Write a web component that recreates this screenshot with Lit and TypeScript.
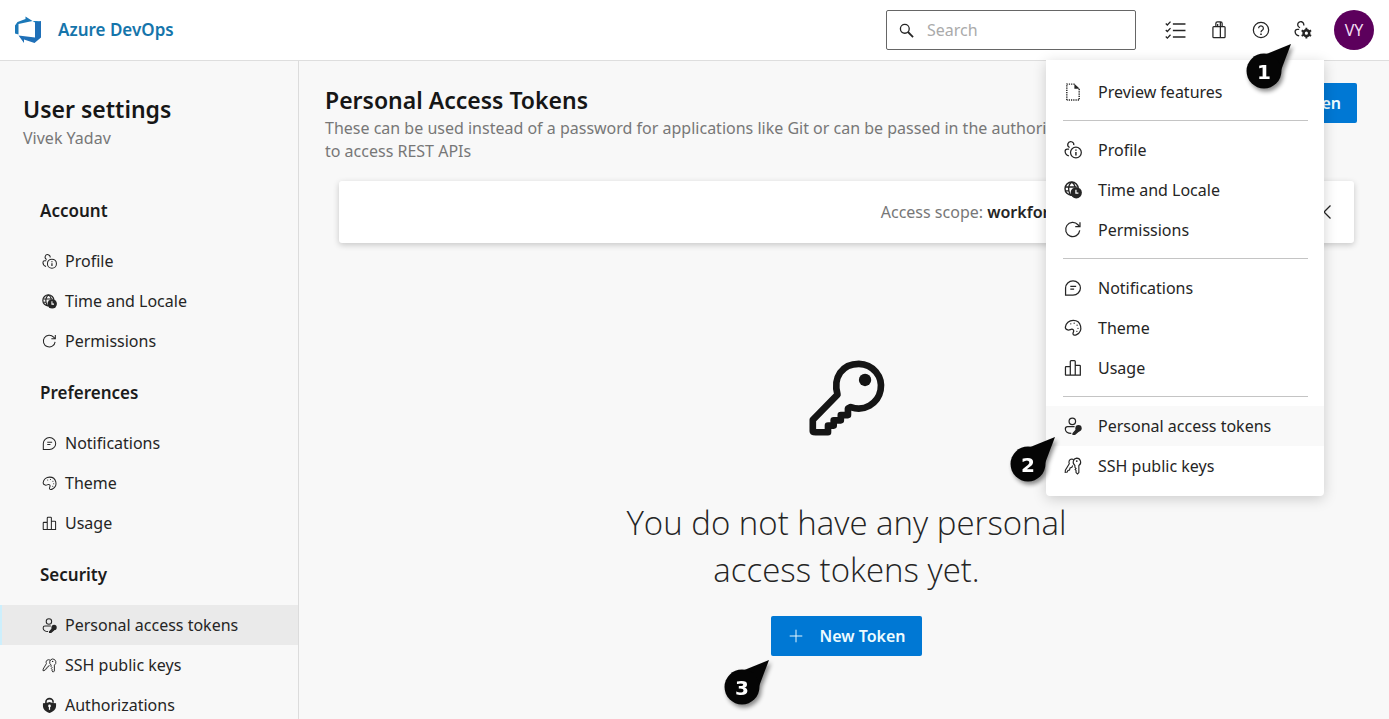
import { LitElement, html, css, svg, nothing } from "lit";
import { customElement, property } from "lit/decorators.js";

const glyphs: Record<string, unknown> = {
  search: svg`<circle cx="6.2" cy="6.2" r="4.7" stroke-width="1.4"/><path d="M9.6 9.6 15 15" stroke-width="1.9"/>`,
  checklist: svg`<path d="M6 3h9.6M6 8h9.6M6 13h9.6" stroke-width="1.1"/><path d="m.6 2.6 1.2 1.2 2.4-2.6M.6 7.6l1.2 1.2 2.4-2.6M.6 12.6l1.2 1.2 2.4-2.6" stroke-width="1"/>`,
  bag: svg`<rect x="2.600" y="5" width="10.800" height="9.800" rx=".8"/><path d="M5.200 5V2.200Q5.200.8 6.600.8h2.800q1.400 0 1.400 1.400V5M9.200 .8v14M6.800 2.600v2.400"/>`,
  help: svg`<circle cx="8" cy="8" r="6.8"/><path d="M5.9 6.5a2.1 2.1 0 1 1 3.2 1.8Q8 9 8 10"/><path d="M8 11.2v1.2" stroke-width="1.4"/>`,
  settings: svg`<path d="M8.600 4A2.700 2.700 0 1 0 5.400 5.900M4.600 7.400H2.900A1.900 1.900 0 0 0 1 9.300c0 2 1.400 3.500 3.600 4" stroke-width="1.200"/><circle cx="11" cy="10.800" r="2.500" stroke-width="2.200"/><path d="M11 6v2M11 13.600v2M6.800 8.400l1.800 1M13.400 12.200l1.800 1M6.800 13.200l1.800-1M13.400 9.400l1.800-1" stroke-width="1.700"/>`,
  preview: svg`<path d="M2.5 15.2V1h7.2M13.5 5.4v9.8h-11" stroke-dasharray="1.1 .9" stroke-width="1.3"/><path d="M9.2.6v4.600h4.800Z" fill="currentColor" stroke="none"/>`,
  profile: svg`<path d="M8.7 3.7A2.7 2.7 0 1 0 5 5.8M4.5 7.2H2.9A1.9 1.9 0 0 0 1 9.100c0 2.200 1.300 3.600 3.300 4.200"/><circle cx="10.6" cy="10.3" r="4.8"/><path d="M10.6 9.800v3M10.6 7.600v1.100" stroke-width="1.3"/>`,
  globe: svg`<circle cx="6.800" cy="6.800" r="5.900" stroke-width="1.300"/><path d="M1.600 5.300h9.600M6.800 1C4.600 2.600 3.800 5.600 4.300 8.600 4.600 10.600 5.200 12 6.200 12.800M7 1c1.700 1 2.400 2.400 2.800 4M1.600 8.800h3" stroke-width="1.200"/><circle cx="10.900" cy="10.500" r="5" fill="currentColor" stroke="none"/><path d="M10.600 7.700v3.100h2.200" stroke="#fff" stroke-width="1.100"/>`,
  refresh: svg`<path d="M14 8.400A6.300 6.300 0 1 1 12.400 3.300L14 5"/><path d="M14.200 1v4.100H10"/>`,
  chat: svg`<path d="M1.400 14.300V8A6.600 6.300 0 1 1 8 14.300Z"/><path d="M5.600 6.600h5.200M5.600 9.100h3.400"/>`,
  palette: svg`<path d="M1.200 7.200C1.600 3.600 4.600 1.200 8.200 1.200a6.700 6.700 0 0 1 3 12.700c-1.500.8-3 .7-3.200-.6-.2-1.100.8-1.800.6-3C8.400 9.200 7.300 8.800 6.200 9.200c-1.100.4-1.600.9-2.900.5C1.900 9.300 1.100 8.500 1.200 7.200Z"/><path d="M6 4.300h.1M9 3.700h.1M11.600 5.500h.1M12.400 8.300h.1M11.400 10.900h.1" stroke-width="1.100" stroke-linecap="round"/>`,
  chart: svg`<path d="M1.300 14.300V7.400q0-.6.600-.6h3.700V14.300M5.600 14.300V2.200q0-.8.800-.8h2.800q.8 0 .8.800V14.300M10 5.600h3.800q.7 0 .7.700v8H1"/>`,
  token: svg`<circle cx="7.400" cy="3.800" r="2.900"/><path d="M9.400 8.600H3.200A2 2 0 0 0 1.200 10.600c0 2.400 2.100 3.900 5.300 3.900"/><circle cx="12.900" cy="10" r="2.800" fill="currentColor" stroke="none"/><path d="m11.600 10.600-3.600 4v.8h1.600l4-3.400Z" fill="currentColor" stroke="currentColor" stroke-width="1.100"/>`,
  keys: svg`<path d="M11.300 1a3.600 3.600 0 0 1 1.900 6.600v6.200l-1.200 1.300-1.300-1.300V12l-.8-.9.8-.9-1-1V7.500A3.600 3.600 0 0 1 11.300 1Z" stroke-width="1"/><path d="M11.300 3.600h.1" stroke-width="1.500" stroke-linecap="round"/><path d="M8.600 2.300 6.900 1.800C4.600 2 3.900 4.200 4.700 6L1.200 11.800l-.1 1.800 1.800-.3.600-1.400 1.400-.4.500-1.700 1.600-.6.700-1.600" stroke-width="1"/>`,
  shield: svg`<path d="M4.200 6V4a3.800 3.300 0 0 1 7.600 0v1" stroke-width="1.700"/><path d="M1 5.600q3.800 0 7-1.400 3.200 1.400 7 1.400v2.600c0 3.900-2.800 6.300-7 7.800-4.200-1.500-7-3.900-7-7.800Z" fill="currentColor" stroke="none"/><circle cx="8" cy="8.400" r="1.400" fill="#fff" stroke="none"/><path d="M8 8.600v4" stroke="#fff" stroke-width="1.300"/>`,
  plus: svg`<path d="M8 .8v14.400M.8 8h14.400"/>`,
  chevron: svg`<path d="M11.500 1.500 5 8l6.500 6.500" stroke-width="1.300"/>`,
  key: svg`<path d="M.8 15V12.600L6 7.300C5 3.600 7 .8 10.500.8a4.700 4.700 0 1 1-1.700 9.100l-.6.300v1.400H6.700v1.100H5.200v1.100H4v1.400H1.400Q.8 15.200.8 15Z" stroke-width="1.400" stroke-linejoin="round"/><circle cx="11.800" cy="4.200" r="1.300" fill="currentColor" stroke="none"/>`,
};

@customElement("ui-icon")
class UiIcon extends LitElement {
  @property() name = "";
  static styles = css`
    :host { display: inline-block; flex: none; width: 18px; height: 18px; }
    .glyph { display: block; width: 100%; height: 100%; overflow: visible; }
  `;
  render() {
    return html`<svg class="glyph" viewBox="0 0 16 16" fill="none" stroke="currentColor" stroke-width="1.1" aria-hidden="true">${glyphs[this.name] ?? nothing}</svg>`;
  }
}

@customElement("step-marker")
class StepMarker extends LitElement {
  @property() step = "";
  static styles = css`
    :host { display: block; width: 46px; height: 46px; pointer-events: none; }
    .marker { display: block; overflow: visible; filter: drop-shadow(2px 3px 2px rgba(0, 0, 0, 0.45)); }
    .number { font: bold 20px "DejaVu Sans", Verdana, sans-serif; fill: #fff; text-anchor: middle; }
  `;
  render() {
    return html`<svg class="marker" width="46" height="46" viewBox="0 0 46 46">
      <path d="M45 1 8 16 31 38Z" fill="#050505"/>
      <circle cx="18" cy="28" r="17.500" fill="#050505"/>
      <text class="number" x="18" y="36">${this.step}</text>
    </svg>`;
  }
}

type Item = [icon: string, label: string];

const account: Item[] = [["profile", "Profile"], ["globe", "Time and Locale"], ["refresh", "Permissions"]];
const preferences: Item[] = [["chat", "Notifications"], ["palette", "Theme"], ["chart", "Usage"]];
const security: Item[] = [["token", "Personal access tokens"], ["keys", "SSH public keys"]];

const navGroups: { title: string; items: Item[] }[] = [
  { title: "Account", items: account },
  { title: "Preferences", items: preferences },
  { title: "Security", items: [...security, ["shield", "Authorizations"]] },
];
const menuGroups: Item[][] = [[["preview", "Preview features"]], account, preferences, security];
const current = "Personal access tokens";

@customElement("app-root")
class AppRoot extends LitElement {
  static styles = css`
    :host {
      display: flex;
      flex-direction: column;
      height: 100vh;
      overflow: hidden;
      font: 16px/24px "Noto Sans", "Open Sans", sans-serif;
      color: #252525;
      background: #f8f8f8;
    }
    * { box-sizing: border-box; }
    h1, h2, h3, p, ul { margin: 0; padding: 0; }
    ul { list-style: none; }
    a { color: inherit; text-decoration: none; }
    button { font: inherit; color: inherit; border: 0; background: none; padding: 0; cursor: pointer; }

    .header {
      position: relative;
      z-index: 1;
      display: flex;
      align-items: center;
      flex: none;
      height: 61px;
      padding: 0 15px 0 14px;
      background: #fff;
      border-bottom: 1px solid #dedede;
    }
    .brand { display: flex; align-items: center; gap: 16px; margin-right: auto; font-size: 17px; font-weight: 600; color: #1575ab; }
    .logo { width: 28px; height: 28px; }
    .search {
      display: flex;
      align-items: center;
      gap: 13px;
      width: 250px;
      height: 40px;
      margin-right: 16px;
      padding: 0 12px;
      background: #fff;
      border: 1px solid #666;
      border-radius: 2px;
    }
    .search ui-icon { width: 15px; height: 15px; }
    .search-input { flex: 1; min-width: 0; padding: 0; border: 0; outline: 0; background: none; font: inherit; }
    .search-input::placeholder { color: #aaa; opacity: 1; }
    .tools { display: flex; align-self: stretch; margin-right: 10px; }
    .tool { display: flex; align-items: center; justify-content: center; width: 42px; height: 100%; }
    .tool.wide { width: 46px; }
    .tool.wide ui-icon { width: 21px; height: 21px; }
    .settings { position: relative; }
    .avatar { width: 40px; height: 40px; border-radius: 50%; background: #5c005c; color: #f1dcf1; }

    .menu {
      position: absolute;
      top: 100%;
      right: 0;
      width: 278px;
      padding: 12px 0 10px;
      background: #fff;
      border-radius: 0 0 4px 4px;
      box-shadow: 0 3px 14px rgba(0, 0, 0, 0.18);
    }
    .menu-group + .menu-group::before { content: ""; display: block; height: 1px; margin: 8px 16px 9px 17px; background: #c4c4c4; }
    .menu-item { display: flex; align-items: center; gap: 16px; width: 100%; height: 40px; padding: 0 18px; text-align: left; }
    .menu-item.current { background: #f9f9f9; }
    .marker-1, .marker-2, .marker-3 { position: absolute; }
    .marker-1 { top: 43px; right: 32px; }
    .marker-2 { bottom: 14px; right: 268px; }
    .marker-3 { top: 43px; right: 152px; }

    .body { display: flex; flex: 1; min-height: 0; }
    .sidebar { flex: none; width: 299px; overflow: hidden; border-right: 1px solid #dcdcdc; }
    .intro { padding: 31px 23px 29px; color: #777; }
    .page-name { font-size: 23px; line-height: 34px; font-weight: 600; color: #161616; }
    .group-title { padding: 12px 40px 10px; font-size: 17px; line-height: 40px; font-weight: 600; color: #1c1c1c; }
    .nav-item { display: flex; align-items: center; gap: 8px; height: 40px; padding: 0 42px; white-space: nowrap; }
    .nav-item ui-icon { width: 15px; height: 15px; }
    .nav-item.current { padding-left: 40px; background: #eaeaea; border-left: 2px solid #cdeffc; }

    .content { flex: 1; min-width: 0; padding: 22px 32px 0 26px; }
    .content-head { display: flex; align-items: flex-start; gap: 48px; }
    .headline { flex: 1; min-width: 0; }
    .title { font-size: 23px; line-height: 34px; font-weight: 600; color: #161616; }
    .description { line-height: 23px; color: #777; }
    .primary {
      display: flex;
      align-items: center;
      gap: 16px;
      height: 40px;
      padding: 0 16px 0 18px;
      background: #0078d4;
      color: #eefcff;
      border-radius: 2px;
      font-weight: 600;
      white-space: nowrap;
    }
    .primary ui-icon { width: 14px; height: 14px; }
    .panel { padding: 0 3px 0 14px; }
    .filters {
      display: flex;
      align-items: center;
      justify-content: flex-end;
      height: 62px;
      margin-top: 18px;
      padding-right: 19px;
      background: #fff;
      border-radius: 3px;
      box-shadow: 0 2px 6px rgba(0, 0, 0, 0.2);
    }
    .scope { width: 44%; color: #777; }
    .scope-value { font-weight: 600; color: #252525; }
    .collapse ui-icon { display: block; width: 16px; height: 16px; }
    .empty { display: flex; flex-direction: column; align-items: center; padding-top: 117px; text-align: center; }
    .empty > ui-icon { width: 76px; height: 76px; color: #151515; }
    .empty-text { max-width: 480px; margin: 63px 0 23px; font: 300 33px/47px "Open Sans", "Noto Sans", sans-serif; }
    .action { position: relative; }
  `;

  private navItem([icon, label]: Item) {
    return html`<li><a class="nav-item ${label === current ? "current" : ""}" href="#"><ui-icon name=${icon}></ui-icon>${label}</a></li>`;
  }

  private menuItem([icon, label]: Item) {
    return html`<li><button class="menu-item ${label === current ? "current" : ""}"><ui-icon name=${icon}></ui-icon>${label}</button></li>`;
  }

  render() {
    return html`
      <header class="header">
        <a class="brand" href="#">
          <svg class="logo" viewBox="0 0 28 28" aria-hidden="true">
            <path d="M1 9.500 3.500 6 11.500 3V.500l7 4.500L4.500 8v10.500L1 17.500Z" fill="#1b78b8"/>
            <path d="M27 5v16.500L20.500 27 10 23.500V27L4.500 19.500 21 21.500V6Z" fill="#1f70b8"/>
            <path d="m18.500 5 8.500 0-6 1.500Z" fill="#1c80c0"/>
          </svg>
          Azure DevOps
        </a>
        <label class="search"><ui-icon name="search"></ui-icon><input class="search-input" type="text" placeholder="Search" aria-label="Search" /></label>
        <div class="tools">
          <button class="tool wide" aria-label="Work items"><ui-icon name="checklist"></ui-icon></button>
          <button class="tool" aria-label="Marketplace"><ui-icon name="bag"></ui-icon></button>
          <button class="tool" aria-label="Help"><ui-icon name="help"></ui-icon></button>
          <div class="settings">
            <button class="tool" aria-label="User settings"><ui-icon name="settings"></ui-icon></button>
            <div class="menu">
              ${menuGroups.map((group) => html`<ul class="menu-group">${group.map((item) => this.menuItem(item))}</ul>`)}
              <step-marker class="marker-2" step="2"></step-marker>
            </div>
            <step-marker class="marker-1" step="1"></step-marker>
          </div>
        </div>
        <button class="avatar">VY</button>
      </header>
      <div class="body">
        <nav class="sidebar">
          <div class="intro"><h2 class="page-name">User settings</h2><p>Vivek Yadav</p></div>
          ${navGroups.map(({ title, items }) => html`<section><h3 class="group-title">${title}</h3><ul>${items.map((item) => this.navItem(item))}</ul></section>`)}
        </nav>
        <main class="content">
          <div class="content-head">
            <div class="headline">
              <h1 class="title">Personal Access Tokens</h1>
              <p class="description">These can be used instead of a password for applications like Git or can be passed in the authorization header to access REST APIs</p>
            </div>
            <button class="primary"><ui-icon name="plus"></ui-icon>New Token</button>
          </div>
          <div class="panel">
            <div class="filters">
              <div class="scope">Access scope: <span class="scope-value">workforce</span></div>
              <button class="collapse" aria-label="Collapse filters"><ui-icon name="chevron"></ui-icon></button>
            </div>
            <div class="empty">
              <ui-icon name="key"></ui-icon>
              <p class="empty-text">You do not have any personal access tokens yet.</p>
              <div class="action">
                <button class="primary"><ui-icon name="plus"></ui-icon>New Token</button>
                <step-marker class="marker-3" step="3"></step-marker>
              </div>
            </div>
          </div>
        </main>
      </div>
    `;
  }
}
